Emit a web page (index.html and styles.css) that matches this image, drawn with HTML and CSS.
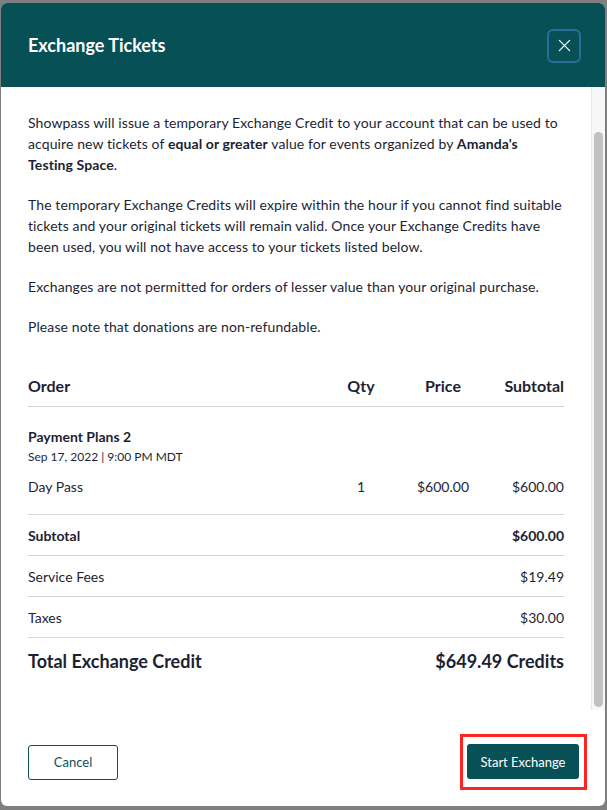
FILE: index.html
```html
<!DOCTYPE html>
<html lang="en">
<head>
<meta charset="utf-8">
<title>Exchange Tickets</title>
<link rel="stylesheet" href="styles.css">
</head>
<body>
<div class="modal">
  <header class="modal-header">
    <h2 class="modal-title">Exchange Tickets</h2>
    <button class="close-btn" aria-label="Close">
      <svg viewBox="0 0 14 14" width="13" height="13"><path d="M1.5 1.5L12.5 12.5M12.5 1.5L1.5 12.5" stroke="#fff" stroke-width="1.3" stroke-linecap="round" fill="none"/></svg>
    </button>
  </header>
  <div class="modal-body">
    <div class="scroll-view">
      <div class="body-inner">
        <p class="first">About ticket exchanges</p>
        <p>Showpass will issue a temporary Exchange Credit to your account that can be used to acquire new tickets of <strong>equal or greater</strong> value for events organized by <strong>Amanda's Testing Space</strong>.</p>
        <p>The temporary Exchange Credits will expire within the hour if you cannot find suitable tickets and your original tickets will remain valid. Once your Exchange Credits have been used, you will not have access to your tickets listed below.</p>
        <p>Exchanges are not permitted for orders of lesser value than your original purchase.</p>
        <p class="last">Please note that donations are non-refundable.</p>

        <div class="order-table">
          <div class="grid-row table-head">
            <span>Order</span><span class="c">Qty</span><span class="c">Price</span><span class="r">Subtotal</span>
          </div>
          <div class="order-item">
            <div class="event-name">Payment Plans 2</div>
            <div class="event-date">Sep 17, 2022 | 9:00 PM MDT</div>
            <div class="grid-row item-line">
              <span>Day Pass</span><span class="c">1</span><span class="c">$600.00</span><span class="r">$600.00</span>
            </div>
          </div>
          <div class="sum-row strong-row"><span>Subtotal</span><span>$600.00</span></div>
          <div class="sum-row"><span>Service Fees</span><span>$19.49</span></div>
          <div class="sum-row"><span>Taxes</span><span>$30.00</span></div>
          <div class="total-row"><span>Total Exchange Credit</span><span>$649.49 Credits</span></div>
        </div>
      </div>
    </div>
    <div class="scrollbar"><div class="scroll-thumb"></div></div>
  </div>
  <footer class="modal-footer">
    <button class="btn btn-outline">Cancel</button>
    <div class="highlight">
      <button class="btn btn-primary">Start Exchange</button>
    </div>
  </footer>
</div>
</body>
</html>
```

FILE: styles.css
```css
* { box-sizing: border-box; }

html, body {
  margin: 0;
  height: 810px;
  overflow: hidden;
}

body {
  background: #7f7f7f;
  padding: 3px 2px 4px 1px;
  font-family: "Lato", "Noto Sans", sans-serif;
  color: #1d1f33;
}

.modal {
  width: 604px;
  height: 803px;
  background: #fff;
  border-radius: 6px;
  overflow: hidden;
  display: flex;
  flex-direction: column;
}

.modal-header {
  flex: none;
  height: 84px;
  background: #075056;
  display: flex;
  align-items: center;
  justify-content: space-between;
  padding: 0 24px 0 27px;
}

.modal-title {
  margin: 0;
  color: #fff;
  font-size: 18px;
  font-weight: 700;
  line-height: 24px;
}

.close-btn {
  width: 34px;
  height: 34px;
  padding: 0;
  margin-top: 1px;
  background: transparent;
  border: 2px solid #2c6d98;
  border-radius: 6px;
  display: flex;
  align-items: center;
  justify-content: center;
}

.modal-body {
  flex: none;
  height: 623px;
  display: flex;
}

.scroll-view {
  flex: 1;
  min-width: 0;
  overflow: hidden;
  display: flex;
  flex-direction: column;
  justify-content: flex-end;
}

.scrollbar {
  flex: none;
  width: 14px;
  background: #f7f7f7;
  border-left: 1px solid #e6e6e6;
  padding: 45px 2px 3px 2px;
  display: flex;
}

.scroll-thumb {
  flex: 1;
  background: #c1c1c1;
  border-radius: 5px;
}

.body-inner {
  flex: none;
  padding: 32px 27px 35px 27px;
}

.body-inner p {
  margin: 0 0 19px;
  font-size: 14px;
  line-height: 21px;
  letter-spacing: 0.1px;
}
.body-inner p.first { margin-bottom: 22px; }
.body-inner p.last { margin-bottom: 0; }
.body-inner strong { font-weight: 700; }

.order-table {
  margin-top: 28px;
  font-size: 14px;
}

.grid-row {
  display: grid;
  grid-template-columns: 1fr 60px 104px 69px;
  align-items: center;
}
.grid-row .c { text-align: center; }
.grid-row .r { text-align: right; }

.table-head {
  font-size: 16px;
  font-weight: 700;
  line-height: 22px;
  padding: 10px 0 9px;
  border-bottom: 1px solid #d3d3d9;
}

.order-item {
  padding: 20px 0 17px;
  border-bottom: 1px solid #d3d3d9;
}

.event-name {
  font-weight: 700;
  line-height: 20px;
}

.event-date {
  font-size: 12px;
  line-height: 19px;
}

.item-line {
  margin-top: 11px;
  line-height: 20px;
}

.sum-row {
  display: flex;
  justify-content: space-between;
  line-height: 20px;
  padding: 11px 0 9px;
  border-bottom: 1px solid #d3d3d9;
}
.strong-row { font-weight: 700; }

.total-row {
  display: flex;
  justify-content: space-between;
  font-size: 18px;
  font-weight: 700;
  line-height: 28px;
  padding-top: 9px;
}

.modal-footer {
  flex: 1;
  display: flex;
  align-items: center;
  justify-content: space-between;
  padding: 24px 18px 16px 27px;
}

.btn {
  font-family: "Lato", "Noto Sans", sans-serif;
  font-size: 13px;
  height: 35px;
  border-radius: 3px;
  cursor: pointer;
}

.btn-outline {
  width: 90px;
  background: #fff;
  color: #0b5459;
  border: 1px solid #0b5459;
}

.btn-primary {
  width: 112px;
  background: #075056;
  color: #fff;
  border: none;
  display: block;
}

.highlight {
  border: 3px solid #ff2424;
  padding: 7px 5px 8px 4px;
}
```
